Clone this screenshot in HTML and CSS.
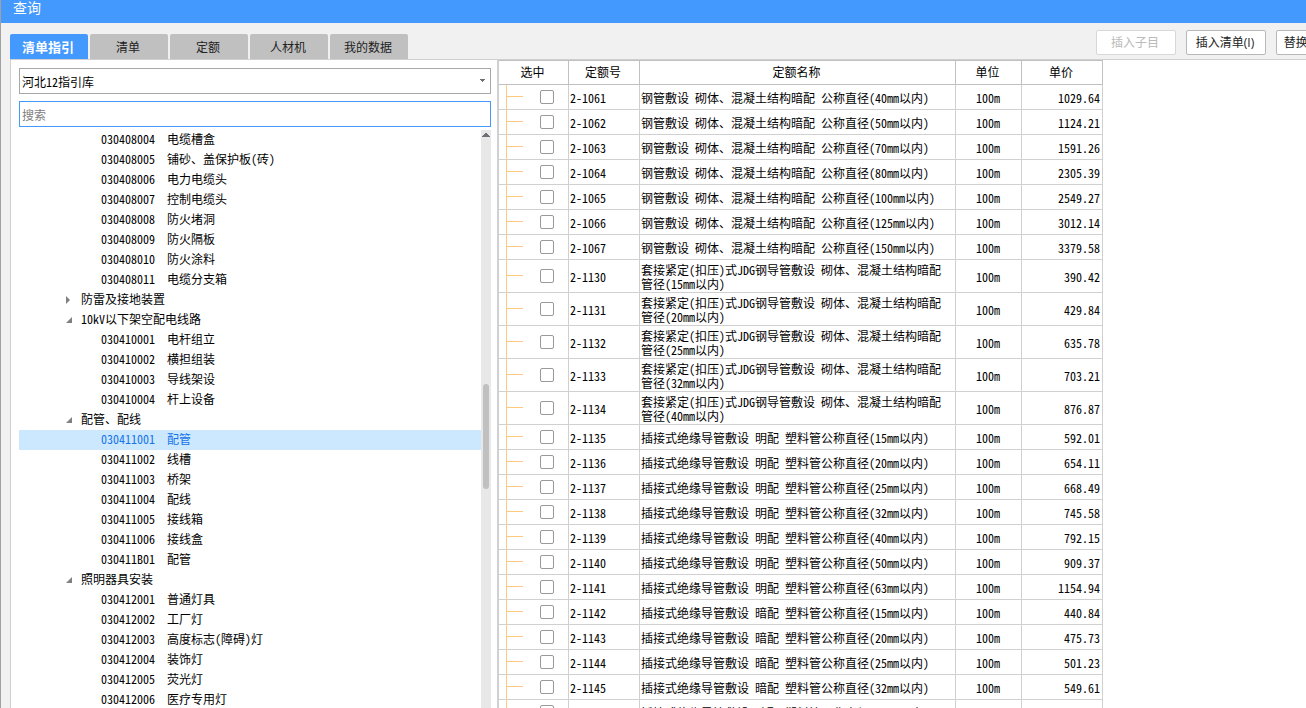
FILE: index.html
```
<!DOCTYPE html>
<html lang="zh-CN">
<head>
<meta charset="utf-8">
<title>查询</title>
<link rel="stylesheet" href="styles.css">
</head>
<body>
<div class="window">
  <header class="titlebar"><h1 class="title">查询</h1></header>
  <div class="toolbar">
    <nav class="tabs" role="tablist">
      <button class="tab tab-active" role="tab" aria-selected="true">清单指引</button>
      <button class="tab" role="tab">清单</button>
      <button class="tab" role="tab">定额</button>
      <button class="tab" role="tab">人材机</button>
      <button class="tab" role="tab">我的数据</button>
    </nav>
    <div class="actions">
      <button class="action" disabled>插入子目</button>
      <button class="action">插入清单(I)</button>
      <button class="action">替换清单(R)</button>
    </div>
  </div>
  <main class="content">
    <section class="guide">
      <div class="combo">
        <select class="field combo-select" aria-label="指引库"><option>河北12指引库</option></select>
        <svg class="combo-arrow" width="5" height="3" viewBox="0 0 5 3" aria-hidden="true"><path d="M0 0h5v1h-1v1h-1v1h-1v-1h-1v-1h-1z" fill="#707070"/></svg>
      </div>
      <input class="field search" type="text" placeholder="搜索" aria-label="搜索">
      <div class="tree-pane">
        <ul class="tree" id="tree" role="tree"></ul>
        <div class="scrollbar" aria-hidden="true">
          <svg class="scroll-up" width="8" height="4" viewBox="0 0 8 4"><path d="M3 0h2v1h1v1h1v1h1v1h-8v-1h1v-1h1v-1h1z" fill="#6f6f78"/></svg>
          <div class="scroll-thumb"></div>
        </div>
      </div>
    </section>
    <section class="quota">
      <table class="grid">
        <colgroup><col class="col-pick"><col class="col-code"><col class="col-name"><col class="col-unit"><col class="col-price"></colgroup>
        <thead><tr><th>选中</th><th>定额号</th><th>定额名称</th><th>单位</th><th>单价</th></tr></thead>
        <tbody id="rows"></tbody>
      </table>
    </section>
  </main>
</div>
<script src="app.js"></script>
</body>
</html>
```

FILE: styles.css
```
* { box-sizing: border-box; }
body {
  margin: 0;
  height: 100vh;
  overflow: hidden;
  background: #f1f1f1;
  color: #000;
  font: 12px/14px "Noto Sans Mono CJK SC", "Noto Sans CJK SC", sans-serif;
}
button, input, select { font: inherit; color: inherit; margin: 0; }
.window {
  height: 100%;
  display: flex;
  flex-direction: column;
  border-left: 1px solid #a0a0a0;
  overflow: hidden;
}
.titlebar {
  flex: none;
  height: 23px;
  padding-left: 12px;
  background: #4499ff;
  color: #fff;
}
.title { margin: 0; font-size: 14px; line-height: 15px; font-weight: 400; }
.toolbar {
  flex: none;
  height: 36px;
  display: flex;
  justify-content: space-between;
  padding-left: 9px;
}
.tabs { display: flex; gap: 2px; align-items: flex-end; }
.tab {
  width: 78px;
  height: 25px;
  padding: 0 2px 0 0;
  border: 0;
  border-radius: 2px 2px 0 0;
  background: #c0c0c0;
  color: #222;
}
.tab-active { background: #4499ff; color: #fff; font-weight: 700; font-size: 13px; }
.actions {
  width: 210px;
  display: flex;
  gap: 10px;
  padding-top: 7px;
  overflow: hidden;
}
.action {
  flex: none;
  width: 80px;
  height: 25px;
  padding: 0 2px 0 0;
  border: 1px solid #b8b8b8;
  border-radius: 2px;
  background: #fff;
  color: #222;
  font-family: "Open Sans", "Noto Sans CJK SC", sans-serif;
  white-space: nowrap;
}
.action:disabled { border-color: #d8d8d8; color: #bababa; }
.content {
  flex: 1;
  min-height: 0;
  display: flex;
  margin-left: 9px;
  border-top: 1px solid #d0d0d0;
  border-left: 1px solid #d0d0d0;
  background: #fff;
}
.guide {
  flex: none;
  width: 486px;
  display: flex;
  flex-direction: column;
  padding: 8px 6px 0 8px;
}
.combo { position: relative; display: flex; margin-bottom: 7px; }
.field {
  flex: none;
  width: 100%;
  height: 26px;
  padding: 2px 2px 0;
  border: 1px solid #a8a8a8;
  border-radius: 0;
  background: #fff;
  outline: none;
}
.combo-select { appearance: none; }
.combo-arrow { position: absolute; right: 6px; top: 11px; }
.search { padding-top: 0; border-color: #4499ff; }
.search::placeholder { color: #808080; opacity: 1; }
.tree-pane { flex: 1; min-height: 0; display: flex; margin-top: 3px; }
.tree { flex: 1; margin: 0; padding: 0; list-style: none; overflow: hidden; }
.node {
  display: flex;
  align-items: center;
  height: 20px;
  padding: 0 0 2px 46px;
  white-space: pre;
}
.leaf { padding-left: 82px; gap: 12px; }
.selected { background: #cce8ff; color: #1674e8; }
.twisty { flex: none; width: 16px; height: 8px; margin-top: 2px; }
.scrollbar {
  flex: none;
  width: 10px;
  display: flex;
  flex-direction: column;
  align-items: center;
  padding-top: 3px;
  background: #e8e8e8;
}
.scroll-up { flex: none; }
.scroll-thumb { width: 6px; height: 105px; margin-top: 247px; border-radius: 3px; background: #c0c0c0; }
.quota { flex: 1; min-width: 0; border-left: 2px solid #d0d0d0; overflow: hidden; }
.grid { width: 604px; table-layout: fixed; border-collapse: separate; border-spacing: 0; }
.col-pick { width: 70px; }
.col-code { width: 71px; }
.col-name { width: 316px; }
.col-unit { width: 66px; }
.col-price { width: 81px; }
.grid th {
  height: 25px;
  padding: 0 2px 2px 0;
  border: solid #c0c0c0;
  border-width: 1px 1px 1px 0;
  font-weight: 400;
}
.grid td {
  height: 25px;
  padding: 3px 2px 1px 1px;
  border: solid #d0d0d0;
  border-width: 0 1px 1px 0;
}
.grid .unit { text-align: center; }
.grid .price { text-align: right; }
.grid .pick { position: relative; padding: 0 0 0 41px; }
.pick::before {
  content: "";
  position: absolute;
  left: 7px;
  top: 0;
  bottom: -1px;
  width: 1px;
  background: #ffc980;
}
.pick::after {
  content: "";
  position: absolute;
  left: 8px;
  top: calc(50% - 1px);
  width: 16px;
  height: 1px;
  background: #ffc980;
}
.check {
  appearance: none;
  display: block;
  width: 14px;
  height: 14px;
  border: 1px solid #999;
  border-radius: 2px;
  background: #fff;
}
```

FILE: app.js
```
const groups = [
  { items: ["030408004 电缆槽盒", "030408005 铺砂、盖保护板(砖)", "030408006 电力电缆头", "030408007 控制电缆头", "030408008 防火堵洞", "030408009 防火隔板", "030408010 防火涂料", "030408011 电缆分支箱"] },
  { title: "防雷及接地装置", items: [] },
  { title: "10kV以下架空配电线路", items: ["030410001 电杆组立", "030410002 横担组装", "030410003 导线架设", "030410004 杆上设备"] },
  { title: "配管、配线", items: ["030411001 配管", "030411002 线槽", "030411003 桥架", "030411004 配线", "030411005 接线箱", "030411006 接线盒", "030411B01 配管"] },
  { title: "照明器具安装", items: ["030412001 普通灯具", "030412002 工厂灯", "030412003 高度标志(障碍)灯", "030412004 装饰灯", "030412005 荧光灯", "030412006 医疗专用灯"] }
];
const closedIcon = '<svg class="twisty" viewBox="0 0 16 8" aria-hidden="true"><path d="M1 0L5 4L1 8z" fill="#808080"/></svg>';
const openIcon = '<svg class="twisty" viewBox="0 0 16 8" aria-hidden="true"><path d="M7 1V7H1z" fill="#808080"/></svg>';
const tree = [];
for (const g of groups) {
  if (g.title) {
    const open = g.items.length > 0;
    tree.push(`<li class="node" role="treeitem" aria-expanded="${open}">${open ? openIcon : closedIcon}<span>${g.title}</span></li>`);
  }
  for (const item of g.items) {
    const [code, name] = item.split(" ");
    const selected = code === "030411001";
    tree.push(`<li class="node leaf${selected ? " selected" : ""}" role="treeitem" aria-selected="${selected}"><span>${code}</span><span>${name}</span></li>`);
  }
}
document.getElementById("tree").innerHTML = tree.join("");

const steel = d => `钢管敷设 砌体、混凝土结构暗配 公称直径(${d}mm以内)`;
const jdg = d => `套接紧定(扣压)式JDG钢导管敷设 砌体、混凝土结构暗配<br>管径(${d}mm以内)`;
const open = d => `插接式绝缘导管敷设 明配 塑料管公称直径(${d}mm以内)`;
const hidden = d => `插接式绝缘导管敷设 暗配 塑料管公称直径(${d}mm以内)`;
const quotas = [
  ["2-1061", steel(40), "1029.64"],
  ["2-1062", steel(50), "1124.21"],
  ["2-1063", steel(70), "1591.26"],
  ["2-1064", steel(80), "2305.39"],
  ["2-1065", steel(100), "2549.27"],
  ["2-1066", steel(125), "3012.14"],
  ["2-1067", steel(150), "3379.58"],
  ["2-1130", jdg(15), "390.42"],
  ["2-1131", jdg(20), "429.84"],
  ["2-1132", jdg(25), "635.78"],
  ["2-1133", jdg(32), "703.21"],
  ["2-1134", jdg(40), "876.87"],
  ["2-1135", open(15), "592.01"],
  ["2-1136", open(20), "654.11"],
  ["2-1137", open(25), "668.49"],
  ["2-1138", open(32), "745.58"],
  ["2-1139", open(40), "792.15"],
  ["2-1140", open(50), "909.37"],
  ["2-1141", open(63), "1154.94"],
  ["2-1142", hidden(15), "440.84"],
  ["2-1143", hidden(20), "475.73"],
  ["2-1144", hidden(25), "501.23"],
  ["2-1145", hidden(32), "549.61"],
  ["2-1146", hidden(40), ""]
];
document.getElementById("rows").innerHTML = quotas.map(([code, name, price]) =>
  `<tr><td class="pick"><input class="check" type="checkbox" aria-label="${code}"></td><td>${code}</td><td>${name}</td><td class="unit">100m</td><td class="price">${price}</td></tr>`
).join("");
```
